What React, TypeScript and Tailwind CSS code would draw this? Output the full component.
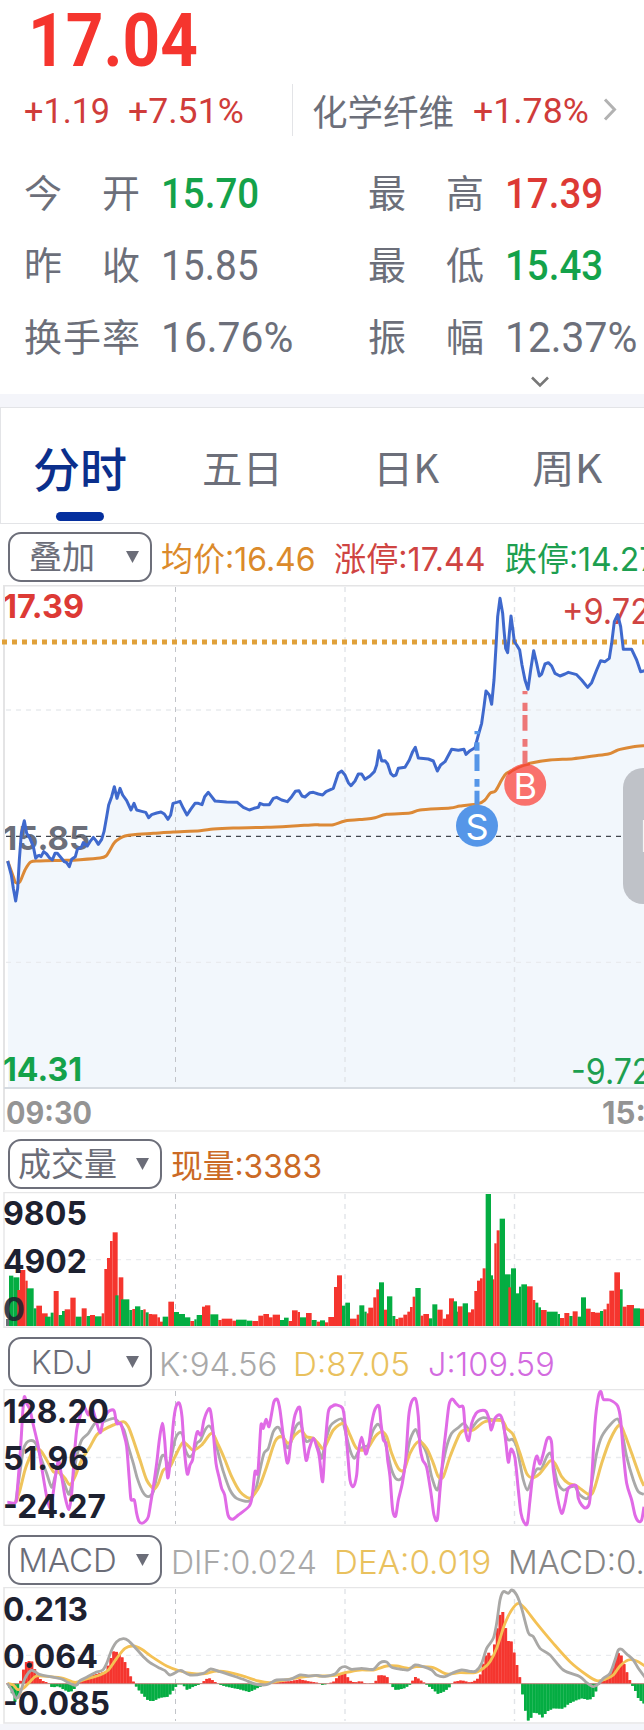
import { useLayoutEffect, useRef, useState } from "react";
import type { ReactNode } from "react";
import clsx from "clsx";

const RED = "#f5352e";
const GREEN = "#04ad42";

/** Text condensed or widened so that it fills the width of its box. */
function Fit({ className, children }: { className: string; children: ReactNode }) {
  const box = useRef<HTMLDivElement>(null);
  const text = useRef<HTMLSpanElement>(null);
  const [scale, setScale] = useState(1);
  useLayoutEffect(() => {
    if (box.current && text.current) setScale(box.current.clientWidth / text.current.offsetWidth);
  }, []);
  return (
    <div ref={box} className={clsx("shrink-0 whitespace-nowrap", className)}>
      <span ref={text} className="inline-block origin-left" style={{ transform: `scaleX(${scale})` }}>
        {children}
      </span>
    </div>
  );
}

type Pt = [number, number];
/** Parses "x,y x,y" series; the second half session starts 960 units in. */
const parse = (s: string, dx = 0): Pt[] =>
  s.trim().split(/\s+/).map((p) => {
    const [x, y] = p.split(",").map(Number);
    return [x + dx, y];
  });
const series = (a: string, b: string) => [...parse(a), ...parse(b, 960)];
const line = (p: Pt[]) => "M" + p.map(([x, y]) => `${x} ${y}`).join("L");
const smooth = (p: Pt[]) => {
  let d = `M${p[0][0]} ${p[0][1]}`;
  for (let i = 0; i < p.length - 1; i++) {
    const a = p[Math.max(0, i - 1)], b = p[i], c = p[i + 1], e = p[Math.min(p.length - 1, i + 2)];
    d += `C${b[0] + (c[0] - a[0]) / 7} ${b[1] + (c[1] - a[1]) / 7} ${c[0] - (e[0] - b[0]) / 7} ${c[1] - (e[1] - b[1]) / 7} ${c[0]} ${c[1]}`;
  }
  return d;
};

const price = series(
  "23,843 34,885 40,925 47,963 53,925 58,840 64,760 73,722 80,760 90,775 100,800 107,835 113,828 118,826 123,830 131,815 140,822 148,833 157,840 165,820 172,820 182,832 193,845 200,848 208,860 215,838 226,830 232,808 245,800 250,788 262,798 270,785 280,772 288,782 295,793 305,778 312,755 320,710 326,675 335,650 343,620 351,655 360,625 368,645 380,662 393,690 402,670 410,690 425,694 437,697 446,713 455,704 470,699 483,696 493,702 504,718 512,705 519,670 530,667 540,664 550,685 561,705 572,688 585,670 595,670 606,674 614,650 625,637 635,650 645,663 680,666 712,667 730,682 748,690 762,685 775,682 780,670 790,674 808,674 820,655 830,652 845,660 862,665 875,650 886,634 897,632 906,648 915,651 930,638 940,637 955,642",
  "8,645 18,635 40,625 55,580 65,573 75,585 85,608 93,617 105,603 115,582 125,582 135,598 150,588 163,575 170,555 177,512 185,543 195,542 203,552 212,580 220,588 228,585 235,565 255,562 268,540 278,515 286,502 295,534 325,537 340,543 352,573 362,555 375,545 395,508 415,511 432,508 438,523 450,512 465,503 475,465 485,430 492,380 498,333 508,345 515,373 522,300 528,200 533,110 540,55 548,100 552,150 557,205 563,218 568,160 573,108 580,160 583,185 590,195 599,210 606,255 615,300 624,328 632,270 641,212 650,250 658,288 665,282 675,252 685,248 695,258 705,280 720,288 735,282 745,277 770,284 785,300 803,322 815,308 830,270 842,242 855,245 868,235 875,190 883,125 893,104 902,140 910,208 935,208 950,240 962,275 975,272",
);
const average = series(
  "23,843 40,890 47,908 60,905 75,870 92,846 120,843 200,841 240,839 300,834 318,828 330,810 343,788 360,775 375,768 400,764 460,760 520,756 600,752 640,747 700,744 800,742 880,738 945,734",
  "0,735 40,734 75,723 140,717 165,713 200,703 270,699 300,690 390,684 420,678 475,671 495,660 510,640 527,632 545,600 560,580 600,560 630,550 690,540 760,536 820,528 865,522 885,514 900,508 940,500 975,497",
);
const jLine = series(
  "22,367 47,367 52,330 62,200 68,100 73,50 80,70 90,90 100,135 115,200 128,280 140,350 150,385 158,350 165,300 175,240 185,290 195,350 207,388 215,340 222,240 230,150 240,110 250,75 265,105 275,80 285,110 300,158 310,120 325,95 342,92 350,130 362,130 372,165 380,200 388,300 393,358 403,360 410,400 417,424 426,430 436,424 445,410 452,370 460,320 470,250 478,180 487,130 494,180 503,293 512,230 520,130 528,80 538,70 546,110 553,210 562,282 570,255 578,238 584,190 592,155 603,165 612,120 625,88 632,95 640,160 648,250 658,295 665,325 674,345 684,405 697,418 715,405 748,378 757,345 765,275 773,282 777,230 783,135 790,145 798,118 807,140 815,100 822,65 832,58 840,90 850,170 860,243 866,240 874,170 885,105 899,82 906,140 918,240 928,205 940,175 950,200 958,230",
  "8,305 15,200 25,95 38,78 50,75 68,85 75,130 83,220 90,300 100,320 110,285 115,220 125,172 137,222 147,190 155,130 165,88 177,78 183,130 190,180 198,190 203,240 210,290 218,390 227,408 235,360 247,310 257,240 266,110 275,65 287,57 295,110 300,200 308,240 320,262 333,340 342,405 352,418 360,330 370,220 378,150 387,75 397,57 408,70 418,80 430,83 436,150 446,182 455,130 468,100 480,92 498,94 508,120 514,150 525,115 540,105 550,130 558,190 565,247 573,207 585,235 595,330 603,400 612,427 622,430 630,360 640,270 650,228 660,252 670,220 680,180 688,172 695,190 700,270 712,350 725,400 735,370 745,325 768,317 775,355 785,375 797,384 808,370 815,300 825,130 835,50 843,35 850,58 870,60 893,78 902,120 910,220 920,310 935,360 945,405 955,424 965,420 972,380",
);
const kLine = series(
  "47,367 58,290 70,210 80,188 90,182 102,184 112,200 125,240 140,280 155,322 165,290 172,275 185,290 200,330 208,342 218,300 230,230 245,180 265,160 285,130 310,125 340,115 355,125 372,150 385,200 400,250 412,295 428,335 445,350 460,335 470,290 485,230 495,230 503,255 512,240 525,180 538,158 548,165 555,205 568,230 580,220 590,190 602,180 615,150 628,138 640,160 655,220 670,275 690,330 710,355 745,364 760,345 770,318 780,270 792,220 805,205 820,155 835,142 850,170 862,203 872,190 885,145 900,128 910,160 920,185 940,175 955,205",
  "5,235 15,190 30,140 45,125 65,117 75,150 90,210 103,235 115,215 130,200 145,195 160,150 175,133 190,165 203,220 215,270 230,298 248,290 260,230 270,180 287,148 300,180 320,220 335,290 352,330 365,270 380,200 395,160 415,143 432,130 450,150 470,125 490,113 520,120 545,120 555,160 565,180 578,178 590,200 600,250 610,300 622,330 635,300 650,268 665,265 680,230 692,220 700,250 712,305 730,330 748,322 765,320 780,345 805,353 820,280 830,220 845,170 870,135 893,117 905,150 920,230 940,300 955,335 972,343",
);
const dLine = series(
  "47,367 60,330 75,270 90,230 100,210 120,210 140,240 160,275 175,275 195,295 210,315 225,290 245,240 270,200 290,165 310,150 340,135 370,125 385,140 400,180 420,240 440,300 462,327 475,310 490,270 510,260 525,230 548,188 565,198 580,210 605,195 635,160 655,195 675,240 695,290 720,335 748,355 765,340 780,315 800,260 825,185 845,170 865,190 885,165 903,152 920,170 940,175 955,190",
  "12,205 40,150 72,130 90,165 110,205 140,208 165,170 185,155 200,170 215,220 235,265 252,270 270,220 295,185 320,205 340,250 355,290 370,290 390,230 420,160 440,150 460,150 495,125 545,122 560,145 580,165 600,220 620,280 637,293 660,280 690,243 705,250 725,290 745,310 770,318 810,345 825,320 845,250 870,180 898,135 915,165 935,220 960,290 972,318",
);
const hist = series(
  "22,371 35,395 47,432 55,410 60,370 70,330 80,303 95,303 105,330 115,350 125,362 140,367 148,373 157,383 175,378 190,388 210,397 225,385 233,373 240,362 260,350 290,342 318,335 330,300 343,270 352,278 365,290 380,315 392,350 403,370 412,385 425,400 445,422 460,423 480,413 505,410 520,390 533,373 548,373 562,390 580,380 600,373 608,370 615,358 628,355 640,362 650,370 665,376 690,382 720,388 748,396 765,388 785,378 810,372 830,366 870,364 900,358 925,364 950,368",
  "5,375 20,372 40,366 58,345 75,340 90,362 105,368 122,363 135,370 150,372 165,368 177,345 200,348 212,375 228,390 250,386 268,376 278,362 287,350 300,360 315,370 335,385 355,402 375,393 392,378 400,366 425,361 450,368 470,360 482,342 492,300 503,275 517,290 528,225 538,170 547,147 555,195 565,243 575,245 585,290 600,355 604,375 610,420 622,482 630,480 640,458 655,460 668,473 680,455 700,445 730,446 745,432 765,422 785,415 808,420 820,410 832,385 838,368 855,358 875,335 890,285 900,275 908,300 920,335 932,368 945,390 955,415 980,438",
);
const dif = series(
  "22,370 35,390 48,415 60,400 75,355 92,332 105,335 118,343 150,350 185,357 205,368 228,376 240,362 260,352 285,338 308,330 320,310 335,270 350,245 370,236 385,242 410,268 430,290 450,308 480,325 495,332 510,345 535,333 545,332 570,345 610,340 632,327 660,335 700,348 735,360 765,372 800,374 830,360 870,358 900,345 925,348 950,346",
  "0,348 15,349 45,342 60,325 75,320 95,328 125,325 160,328 180,308 200,306 215,322 245,328 265,330 285,315 310,320 335,330 350,345 375,350 400,338 425,330 450,334 468,333 485,310 500,265 520,235 530,190 540,120 550,95 565,100 575,90 590,105 605,145 625,218 640,230 660,265 690,285 730,330 780,350 800,368 820,380 835,372 850,355 870,340 885,300 895,270 905,268 920,282 940,300 955,325 975,352",
);
const dea = series(
  "22,370 40,375 52,388 70,385 90,365 110,348 150,350 190,355 225,367 255,358 300,345 325,330 350,295 375,265 400,258 425,268 455,290 500,318 540,333 575,340 615,341 650,333 700,340 735,350 775,363 810,368 850,361 900,352 945,347",
  "0,348 45,346 75,338 120,330 160,330 200,318 230,318 265,325 290,320 340,323 380,342 420,338 465,338 490,325 510,305 530,265 555,190 575,150 595,130 615,145 650,190 700,250 750,305 800,345 830,362 855,358 880,345 900,318 925,300 950,303 975,318",
);

/** Volume runs: colour, start, end, top. */
const volA =
  "g27-40-287 g40-58-292 r52-60-330 r60-76-270 r76-83-302 g80-101-325 g101-110-385 r109-126-377 r126-143-400 g135-152-410 g152-161-398 r161-176-333 g176-186-405 g186-196-393 r194-211-388 r211-227-353 g227-245-410 r245-260-385 g260-270-408 r270-285-405 g285-305-409 r305-313-400 r313-321-267 r321-330-234 r330-338-183 r338-353-157 g346-356-346 r356-370-292 g363-388-358 g388-397-390 r397-405-387 g405-421-379 g421-430-390 r430-437-388 g437-446-397 r446-456-402 r456-472-403 r472-480-412 r480-490-425 g488-505-410 r505-522-365 g522-537-396 g537-555-402 g555-571-412 r571-583-423 g583-590-418 g590-606-405 r606-615-380 r615-631-376 g631-655-403 r655-665-420 r665-697-416 r697-708-422 g708-740-419 g740-757-422 r757-775-423 r775-790-407 r790-807-402 r807-818-412 r818-840-404 g840-852-420 g852-866-413 r866-876-423 r876-893-391 r893-900-396 g900-918-412 r918-935-399 g935-950-420 r950-960-425";
const volB =
  "g0-15-421 r15-25-427 r25-42-411 r42-51-321 r51-66-286 g66-76-377 g76-90-368 r90-110-416 r110-118-404 g118-133-376 g133-140-395 r140-147-400 r145-160-383 r160-169-352 r169-177-328 g177-192-307 r192-201-389 g201-217-349 g217-226-408 r226-235-417 r235-250-413 r250-262-404 r262-270-395 r270-278-381 r278-286-350 g286-302-324 r302-310-407 r310-327-402 g327-337-415 g337-352-373 r352-368-389 r368-378-416 r378-387-403 r387-402-355 g400-411-364 g411-415-395 r413-428-379 g428-444-370 r444-453-397 r453-463-388 r463-471-333 r471-480-302 r480-488-295 r488-497-265 g497-513-42 g511-519-286 r519-523-298 r523-530-190 r530-539-151 g539-555-116 g555-572-283 r565-573-322 g573-588-265 g588-597-340 g597-604-320 g604-621-313 r621-638-319 r638-646-360 g646-655-368 g655-663-382 r663-680-390 g680-713-395 g713-720-402 r720-733-414 r733-748-399 g748-758-408 r758-773-394 g773-783-410 g783-798-352 r798-812-386 r812-825-396 r825-840-398 g840-850-393 r850-860-388 r860-868-371 r868-883-332 r883-900-277 g900-908-328 r908-920-380 r920-942-375 g940-960-385 r960-975-386";
const volumes = [volA, volB].flatMap((s, half) =>
  s.split(" ").map((v) => {
    const [a, b, top] = v.slice(1).split("-").map(Number);
    return { color: v[0] === "g" ? GREEN : RED, x: a + half * 960, w: b - a, top };
  }),
);

const at = (p: Pt[], x: number) => {
  const i = p.findIndex((q) => q[0] >= x);
  if (i <= 0) return p[0][1];
  const [a, b] = [p[i - 1], p[i]];
  return a[1] + ((b[1] - a[1]) * (x - a[0])) / (b[0] - a[0]);
};
const bars = Array.from({ length: 226 }, (_, i) => {
  const x = 24 + i * 8.46;
  return { x, y: at(hist, x + 4) };
});

function Grid({ top, bottom, rows }: { top: number; bottom: number; rows: number[] }) {
  return (
    <g fill="none">
      <path d={`M175.5 ${top + 2}V${bottom}`} stroke="#c2c4c9" strokeDasharray="5 5" />
      <path d={`M345 ${top + 2}V${bottom}M514.5 ${top + 2}V${bottom}`} stroke="#e2e4e8" strokeWidth="1.4" strokeDasharray="5 5" />
      {rows.map((y) => (
        <path key={y} d={`M6 ${y}H644`} stroke="#e9ebee" strokeWidth="1.3" strokeDasharray="5 5" />
      ))}
    </g>
  );
}

function Label({ x = 3, y, w, color = "#1d2130", weight = 700, size = 33, children }: {
  x?: number; y: number; w: number; color?: string; weight?: number; size?: number; children: string;
}) {
  return (
    <text x={x} y={y} textLength={w} lengthAdjust="spacingAndGlyphs" fill={color} fontWeight={weight} fontSize={size} fontFamily="Inter, sans-serif">
      {children}
    </text>
  );
}

function Picker({ className, text, children }: { className: string; text: string; children: string }) {
  return (
    <button className={clsx("ml-2 flex h-[50px] shrink-0 items-center justify-between rounded-[13px] border-2 border-[#6d6f7a] pr-[11px] text-[#6b6d78]", className)}>
      <Fit className={text}>{children}</Fit>
      <svg width="13" height="12" viewBox="0 0 13 12"><path d="M0 0H13L6.5 12Z" fill="#6b6d78" /></svg>
    </button>
  );
}

function Quote({ name, value, color, width }: { name: string[]; value: string; color: string; width: string }) {
  return (
    <div className="flex h-[72px] items-center">
      <div className="-mt-[5px] flex w-[116px] justify-between text-[38px] leading-[72px] text-[#6c6f7a]">
        {name.map((c) => <span key={c}>{c}</span>)}
      </div>
      <Fit className={clsx("ml-[21px] font-[Roboto] text-[42px] leading-[73px]", color, width)}>{value}</Fit>
    </div>
  );
}

export default function App() {
  return (
    <main className="h-[1730px] w-[644px] overflow-hidden bg-white font-['Noto_Sans_CJK_SC',sans-serif]">
      <header className="h-[394px]">
        <Fit className="ml-[28px] h-[80px] w-[170px] font-[Roboto] text-[75px] leading-[80px] font-bold text-[#f5352e]">17.04</Fit>
        <div className="flex h-[62px] items-center pt-[2px] font-[Roboto] text-[35px] leading-[62px] text-[#d03c3a]">
          <Fit className="ml-[24px] w-[86px]">+1.19</Fit>
          <Fit className="ml-[18px] w-[116px]">+7.51%</Fit>
          <div className="-mt-[5px] ml-[48px] h-[52px] w-px bg-[#e3e4e7]" />
          <Fit className="-mt-[5px] ml-[19px] w-[142px] font-['Noto_Sans_CJK_SC'] text-[36px] text-[#6c6f7a]">化学纤维</Fit>
          <Fit className="ml-[19px] w-[116px]">+1.78%</Fit>
          <svg className="-mt-[6px] ml-[14px]" width="14" height="23" viewBox="0 0 14 23" fill="none" stroke="#b2b2b2" strokeWidth="3"><path d="M2 1.5L11.5 11.5L2 21.5" /></svg>
        </div>
        <div className="flex h-[232px] gap-x-[70px] pt-[15px] pl-[24px]">
          <div className="w-[274px]">
            <Quote name={["今", "开"]} value="15.70" color="text-[#14a24a] font-medium" width="w-[98px]" />
            <Quote name={["昨", "收"]} value="15.85" color="text-[#6c6f7a]" width="w-[98px]" />
            <Quote name={["换", "手", "率"]} value="16.76%" color="text-[#6c6f7a]" width="w-[132px]" />
          </div>
          <div>
            <Quote name={["最", "高"]} value="17.39" color="text-[#dd3a35] font-medium" width="w-[98px]" />
            <Quote name={["最", "低"]} value="15.43" color="text-[#14a24a] font-medium" width="w-[98px]" />
            <Quote name={["振", "幅"]} value="12.37%" color="text-[#6c6f7a]" width="w-[132px]" />
          </div>
        </div>
        <svg className="mt-[2px] ml-[531px]" width="18" height="12" viewBox="0 0 18 12" fill="none" stroke="#777" strokeWidth="2.6"><path d="M1 1.5L9 9.5L17 1.5" /></svg>
      </header>
      <div className="h-[13px] bg-[#f4f5fa]" />

      <nav className="flex h-[117px] items-start border-y border-l border-[#e3e4e7] text-[39px] leading-[117px] text-[#6c6f7a]">
        <div className="ml-[31px] flex h-[115px] w-[96px] flex-col items-center">
          <div className="h-[104px] text-[47px] font-medium text-[#0b2f8c]">分时</div>
          <div className="h-[9px] w-[48px] shrink-0 rounded-full bg-[#052f9e]" />
        </div>
        <Fit className="ml-[74px] w-[81px]">五日</Fit>
        <Fit className="ml-[90px] w-[66px]">日K</Fit>
        <Fit className="ml-[93px] w-[70px]">周K</Fit>
      </nav>

      <section className="flex h-[61px] items-start overflow-hidden pt-[8px] font-[Inter,'Noto_Sans_CJK_SC'] text-[33px] leading-[54px] font-normal">
        <Picker className="w-[144px] pl-[19px]" text="w-[66px]">叠加</Picker>
        <Fit className="ml-[9px] w-[155px] text-[#db8a2b]">均价:16.46</Fit>
        <Fit className="ml-[18px] w-[152px] text-[#cf4442]">涨停:17.44</Fit>
        <Fit className="ml-[19px] w-[152px] text-[#1d9f50]">跌停:14.27</Fit>
      </section>

      <section className="h-[547px]">
        <svg width="644" height="547" viewBox="0 585 644 547">
          <g transform="translate(0 580) scale(.33333)">
            <path d={`${line(price)}V1522H24Z`} fill="#f2f7fc" />
          </g>
          <Label y={618} w={81} color="#dd3a35">17.39</Label>
          <Label y={849.5} w={87} color="#6c6f7a">15.85</Label>
          <Label x={562} y={623.5} w={120} color="#cf4442" weight={400} size={35}>+9.72%</Label>
          <Grid top={585} bottom={1082} rows={[710, 962.3]} />
          <path d="M4 1132V585.5H644" fill="none" stroke="#e4e4e5" strokeWidth="2" />
          <path d="M4 1131H644" stroke="#ececec" strokeWidth="1.5" />
          <path d="M4 1088H644" stroke="#d6dbe1" strokeWidth="2" />
          <path d="M6 836.3H644" stroke="#42464e" strokeWidth="1.2" strokeDasharray="5 5" />
          <path d="M2 642H644" stroke="#e0a13a" strokeWidth="5" strokeDasharray="5 5" />
          <g transform="translate(0 580) scale(.33333)" fill="none" strokeLinejoin="round">
            <path d={smooth(average)} stroke="#dc8936" strokeWidth="9" />
            <path d={line(price)} stroke="#3f69cd" strokeWidth="9" />
            <path d="M1431 453v10M1431 487v25M1431 523v50M1431 597v23M1431 632v42" stroke="#5596e8" strokeWidth="15" />
            <path d="M1575 333v10M1575 368v25M1575 405v47M1575 477v23M1575 512v42" stroke="#ed7777" strokeWidth="15" />
          </g>
          <circle cx="477" cy="825.7" r="21" fill="#5596e8" />
          <circle cx="525.2" cy="784.8" r="21" fill="#f9716c" />
          <path d="M508 774C514 769 520 766 530 764" stroke="#f05034" strokeWidth="2.5" fill="none" />
          <g fill="#fff" fontFamily="Inter, sans-serif" fontSize="36" textAnchor="middle">
            <text x="477" y="840">S</text>
            <text x="525.2" y="799">B</text>
          </g>
          <Label y={1081} w={79} color="#14a24a">14.31</Label>
          <Label x={571} y={1084} w={112} color="#1d9f50" weight={400} size={35}>-9.72%</Label>
          <Label x={6} y={1124} w={86} color="#949494" size={31}>09:30</Label>
          <Label x={602} y={1124} w={86} color="#949494" size={31}>15:00</Label>
          <rect x="623" y="768" width="60" height="136" rx="20" fill="#bfc2c8" />
          <path d="M643.6 820V852" stroke="#f4f4f4" strokeWidth="1.4" />
        </svg>
      </section>

      <section className="flex h-[60px] items-start pt-[7px] font-[Inter,'Noto_Sans_CJK_SC'] text-[33px] leading-[54px] font-normal">
        <Picker className="w-[154px] pl-[8px]" text="w-[99px]">成交量</Picker>
        <Fit className="ml-[9px] w-[151px] text-[#cb6a25]">现量:3383</Fit>
      </section>
      <svg className="block" width="644" height="137" viewBox="0 1192 644 137">
        <path d="M644 1192.5H4V1327.3H644" fill="none" stroke="#e6e6e7" strokeWidth="1.4" />
        <Grid top={1192} bottom={1326} rows={[1259.6]} />
        <rect x="6" y="1319" width="4" height="7" fill="#6f7078" />
        <g transform="translate(0 1180) scale(.33333)">
          {volumes.map((v, i) => (
            <rect key={i} x={v.x} y={v.top} width={v.w} height={438 - v.top} fill={v.color} />
          ))}
        </g>
        <Label y={1225} w={84}>9805</Label>
        <Label y={1273} w={84}>4902</Label>
        <g opacity=".86"><Label y={1320.5} w={22}>0</Label></g>
      </svg>

      <section className="flex h-[60px] items-start pt-[8px] font-[Inter] text-[33px] leading-[50px] font-light">
        <Picker className="w-[144px] pl-[21px]" text="w-[62px]">KDJ</Picker>
        <Fit className="mt-[2px] ml-[7px] w-[118px] text-[#a9a9a9]">K:94.56</Fit>
        <Fit className="mt-[2px] ml-[16px] w-[117px] text-[#e9c15e]">D:87.05</Fit>
        <Fit className="mt-[2px] ml-[18px] w-[127px] text-[#d36bdf]">J:109.59</Fit>
      </section>
      <svg className="block" width="644" height="138" viewBox="0 1389 644 138">
        <path d="M644 1389.6H4V1525.4H644" fill="none" stroke="#e6e6e7" strokeWidth="1.3" />
        <Grid top={1389} bottom={1524} rows={[1457.5]} />
        <g transform="translate(0 1380) scale(.33333)" fill="none" strokeLinejoin="round">
          <path d={smooth(kLine)} stroke="#a9a9a9" strokeWidth="8.5" />
          <path d={smooth(dLine)} stroke="#efc45c" strokeWidth="9" />
          <path d={smooth(jLine)} stroke="#e06ae6" strokeWidth="9" />
        </g>
        <Label y={1423} w={106}>128.20</Label>
        <Label y={1470} w={86}>51.96</Label>
        <Label y={1518} w={103}>-24.27</Label>
      </svg>

      <section className="flex h-[60px] items-start pt-[8px] font-[Inter] text-[33px] leading-[50px] font-light">
        <Picker className="w-[154px] pl-[8px]" text="w-[99px]">MACD</Picker>
        <Fit className="mt-[2px] ml-[9px] w-[146px] text-[#a9a9a9]">DIF:0.024</Fit>
        <Fit className="mt-[2px] ml-[17px] w-[157px] text-[#e9c15e]">DEA:0.019</Fit>
        <Fit className="mt-[2px] ml-[17px] w-[190px] text-[#858585]">MACD:0.010</Fit>
      </section>
      <svg className="block" width="644" height="137" viewBox="0 1587 644 137">
        <path d="M644 1587.4H4V1723H644" fill="none" stroke="#e6e6e7" strokeWidth="1.6" />
        <Grid top={1587} bottom={1721} rows={[1655.3]} />
        <g transform="translate(0 1560) scale(.33333)">
          {bars.map((b) => (
            <g key={b.x} fill={b.y < 371 ? RED : GREEN}>
              <rect x={b.x} y={Math.min(b.y, 371)} width="8.6" height={Math.abs(b.y - 371)} fillOpacity=".85" />
              <rect x={b.x} y={Math.min(b.y, 371)} width="7.4" height={Math.abs(b.y - 371)} />
            </g>
          ))}
          <path d="M18 371H1932" stroke="#c98884" strokeWidth="3" />
          <g fill="none" strokeLinejoin="round" strokeWidth="8.5">
            <path d={smooth(dea)} stroke="#f4c154" />
            <path d={smooth(dif)} stroke="#a9a8a6" />
          </g>
        </g>
        <Label y={1621} w={85}>0.213</Label>
        <Label y={1668} w={95}>0.064</Label>
        <Label y={1715} w={107}>-0.085</Label>
      </svg>
      <div className="h-[8px] bg-[#f4f5fa]" />
    </main>
  );
}
